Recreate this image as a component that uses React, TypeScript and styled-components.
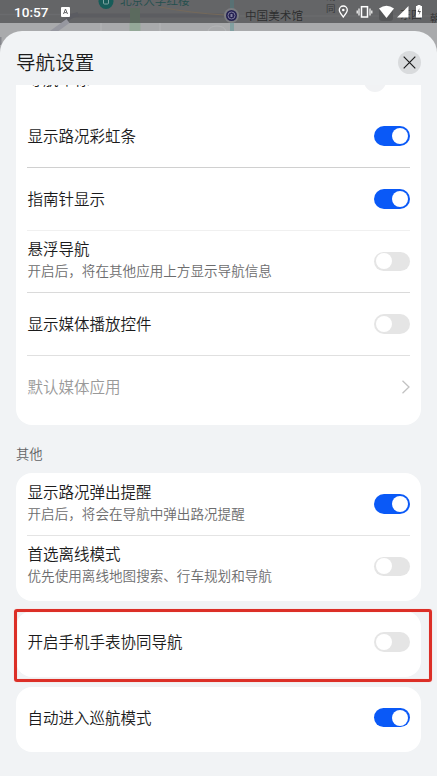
import React from "react";
import styled, { createGlobalStyle } from "styled-components";

const Global = createGlobalStyle`
  * { box-sizing: border-box; }
  body { margin: 0; overflow: hidden; font-family: Roboto, "Noto Sans CJK SC", sans-serif; }
`;

const Screen = styled.div`
  position: relative;
  width: 437px;
  height: 776px;
  overflow: hidden;
  background: #a9aaac;
  padding-top: 31px;
`;

const MapBackdrop = styled.svg`
  position: absolute;
  top: 0;
  left: 0;
`;

const MapLabel = styled.span<{ $x: number; $y: number; $size: number; $color: string }>`
  position: absolute;
  left: ${(p) => p.$x}px;
  top: ${(p) => p.$y}px;
  font: 350 ${(p) => p.$size}px/1 "Noto Sans CJK SC", sans-serif;
  color: ${(p) => p.$color};
  white-space: nowrap;
`;

const StatusBar = styled.header`
  position: absolute;
  top: 0;
  left: 0;
  width: 100%;
  height: 23px;
  overflow: hidden;
`;

const Clock = styled.time`
  position: absolute;
  left: 14px;
  top: 4px;
  color: #fff;
  font: 500 13.6px/17px Roboto, sans-serif;
`;

const StatusIcons = styled.svg`
  position: absolute;
  top: 0;
  left: 0;
`;

const Sheet = styled.main`
  position: relative;
  height: 745px;
  background: #f1f3f5;
  border-radius: 22px 22px 0 0;
  overflow: hidden;
`;

const SheetHeader = styled.div`
  height: 54px;
  padding: 8px 16px 0;
  display: flex;
  align-items: center;
  justify-content: space-between;
`;

const Title = styled.h1`
  margin: 0;
  font: 350 19.6px/28px "Noto Sans CJK SC", sans-serif;
  color: #1b1b1c;
`;

const CloseButton = styled.button`
  width: 23px;
  height: 23px;
  padding: 0;
  border: 0;
  border-radius: 50%;
  background: #d9dbdd;
  display: grid;
  place-items: center;
`;

const ScrollArea = styled.div`
  height: 691px;
  padding: 0 16px;
  overflow: hidden;
`;

const Card = styled.section<{ $bottom?: number; $gap?: number; $open?: boolean }>`
  background: #fff;
  border-radius: ${(p) => (p.$open ? "0 0 16px 16px" : "16px")};
  padding: 0 11px ${(p) => p.$bottom ?? 3}px;
  margin-bottom: ${(p) => p.$gap ?? 0}px;
  width: 405px;
`;

const ClippedRow = styled.div`
  height: 20.2px;
  overflow: hidden;
  display: flex;
  justify-content: space-between;
  align-items: flex-start;
`;

const ClippedLabel = styled.span`
  font: 350 15.5px/20px "Noto Sans CJK SC", sans-serif;
  color: #1f1f20;
  margin: -17px 0 0 0.5px;
`;

const ClippedKnob = styled.i`
  width: 22px;
  height: 22px;
  border-radius: 50%;
  background: #f1f2f4;
  margin: -15px 24px 0 0;
`;

const Row = styled.div<{ $line?: string }>`
  height: 62.7px;
  display: flex;
  align-items: center;
  justify-content: space-between;
  border-bottom: 1px solid ${(p) => p.$line ?? "transparent"};
`;

const Copy = styled.div<{ $lift?: number }>`
  padding: 0 0 ${(p) => p.$lift ?? 1.5}px 0.5px;
`;

const Label = styled.div<{ $muted?: boolean }>`
  font: 350 15.5px/22px "Noto Sans CJK SC", sans-serif;
  color: ${(p) => (p.$muted ? "#999" : "#1b1b1c")};
  white-space: nowrap;
`;

const Hint = styled.div`
  font: 350 13.58px/22px "Noto Sans CJK SC", sans-serif;
  color: #6c6c6d;
  white-space: nowrap;
`;

const Toggle = styled.span<{ $on?: boolean }>`
  width: 35.6px;
  height: 19.6px;
  padding: 1.8px;
  border-radius: 10px;
  background: ${(p) => (p.$on ? "#0a59f7" : "#e5e5e5")};
  display: flex;
  justify-content: ${(p) => (p.$on ? "flex-end" : "flex-start")};
  &::after {
    content: "";
    width: 16px;
    height: 16px;
    border-radius: 50%;
    background: #fff;
  }
`;

const SectionTitle = styled.h2`
  margin: 0;
  height: 48px;
  padding-top: 18px;
  font: 350 13.3px/22px "Noto Sans CJK SC", sans-serif;
  color: #626365;
`;

const Highlight = styled.div`
  position: absolute;
  left: 13.5px;
  top: 577.5px;
  width: 418px;
  height: 73px;
  border: 3px solid #dc2f27;
  border-radius: 3px;
  box-shadow: 0 0 1px #f8a09a, inset 0 0 1px #f8a09a;
`;

type SettingProps = { label: string; hint?: string; on?: boolean; line?: string };

function Setting({ label, hint, on, line }: SettingProps) {
  return (
    <Row $line={line}>
      <Copy $lift={hint ? 4 : 1.5}>
        <Label>{label}</Label>
        {hint && <Hint>{hint}</Hint>}
      </Copy>
      <Toggle $on={on} role="switch" aria-checked={!!on} />
    </Row>
  );
}

export default function App() {
  return (
    <>
      <Global />
      <Screen>
        <MapBackdrop width="437" height="60" viewBox="0 0 437 60">
          <rect width="437" height="60" fill="#a9aaac" />
          <rect width="437" height="23" fill="#646567" />
          <path d="M70 15.500H225" stroke="#5c5d61" strokeWidth="4" />
          <path d="M0 14.500H60M240 16H437" stroke="#6a6b6e" strokeWidth="1.500" />
          <path d="M78 14Q69 16 64 23" stroke="#5b5c62" strokeWidth="4" fill="none" />
          <path d="M68 21L50 34" stroke="#96979f" strokeWidth="5" />
          <path d="M0 37V45" stroke="#85868c" strokeWidth="3" />
          <path d="M135 8V23" stroke="#5b6a5e" strokeWidth="10" />
          <path d="M135 23V31" stroke="#94a898" strokeWidth="11" />
          <path d="M232 0V23" stroke="#587174" strokeWidth="4" />
          <path d="M232 23V31" stroke="#82a0a1" strokeWidth="4" />
          <path d="M101 23V31M160 23V31M208 31q2-5 9-5t9 5" stroke="#b5b6b8" fill="none" />
          <path d="M160 7Q190 13 225 15" stroke="#75695a" fill="none" />
          <circle cx="106" cy="1.500" r="7.500" fill="#175c59" />
          <rect x="103.500" y="-2" width="5" height="6" rx="1" stroke="#7fa5a3" fill="none" />
          <circle cx="231.500" cy="15.500" r="7.500" fill="#7b7c80" />
          <circle cx="231.500" cy="15.500" r="5.500" fill="#242052" />
          <circle cx="231.500" cy="15.500" r="3.500" stroke="#8583a0" strokeWidth=".9" fill="none" />
          <path d="M230.500 14h2v3h-2z" fill="#8583a0" />
          <rect x="379" y="8" width="14" height="13" rx="3" fill="#555658" />
        </MapBackdrop>
        <StatusBar>
          <MapLabel $x={120} $y={-5.5} $size={11.6} $color="#234f4e">北京大学红楼</MapLabel>
          <MapLabel $x={245} $y={10} $size={11.6} $color="#2c2d2e">中国美术馆</MapLabel>
          <MapLabel $x={326} $y={-8} $size={9.5} $color="#343536">胡</MapLabel>
          <MapLabel $x={326} $y={4} $size={9.5} $color="#343536">同</MapLabel>
          <MapLabel $x={400} $y={9} $size={11} $color="#303132">东四</MapLabel>
          <MapLabel $x={430} $y={13} $size={10} $color="#303132">朝</MapLabel>
          <Clock>10:57</Clock>
          <StatusIcons width="437" height="23" viewBox="0 0 437 23">
            <rect x="61" y="7" width="9" height="10" rx="1" fill="#fff" />
            <path d="M63.500 14L65.500 9L67.500 14M64.200 12.600H66.800" stroke="#646567" fill="none" />
            <path d="M343.300 17C341 14 339.300 12 339.300 10a4 4 0 0 1 8 0C347.300 12 345.600 14 343.300 17Z" stroke="#fff" strokeWidth="1.300" fill="none" />
            <circle cx="343.300" cy="10" r="1.300" fill="#fff" />
            <rect x="361.500" y="6.700" width="6" height="10.300" stroke="#fff" strokeWidth="1.500" fill="none" />
            <path d="M359 8.500V15.500M357.200 10.500V13.500M370 8.500V15.500M371.800 10.500V13.500" stroke="#fff" strokeWidth="1.200" />
            <path d="M379 8.500Q386.500 3 394 8.500L386.500 18Z" fill="#fff" />
            <path d="M408.500 6V17.500H397Z" fill="#fff" />
            <path d="M416 6h1.500V5h3v1H422V17.500H416Z" fill="#fff" />
            <path d="M419.500 8L417.500 12H419.500L418.500 15.500L421 11H419Z" fill="#555" />
          </StatusIcons>
        </StatusBar>
        <Sheet>
          <SheetHeader>
            <Title>导航设置</Title>
            <CloseButton aria-label="关闭">
              <svg width="13" height="13" viewBox="0 0 13 13">
                <path d="M.7.7L12.300 12.300M12.300.7L.7 12.300" stroke="#1c1c1d" strokeWidth="1.200" />
              </svg>
            </CloseButton>
          </SheetHeader>
          <ScrollArea>
            <Card $open $bottom={6.3}>
              <ClippedRow>
                <ClippedLabel>导航车标</ClippedLabel>
                <ClippedKnob />
              </ClippedRow>
              <Setting label="显示路况彩虹条" on line="#d0d0d0" />
              <Setting label="指南针显示" on line="#f0f0f0" />
              <Setting label="悬浮导航" hint="开启后，将在其他应用上方显示导航信息" line="#dadada" />
              <Setting label="显示媒体播放控件" line="#e0e0e0" />
              <Row>
                <Copy><Label $muted>默认媒体应用</Label></Copy>
                <svg width="9" height="14" viewBox="0 0 9 14">
                  <path d="M1.500.7L8 7L1.500 13.300" stroke="#c2c2c2" strokeWidth="1.300" fill="none" />
                </svg>
              </Row>
            </Card>
            <SectionTitle>其他</SectionTitle>
            <Card $bottom={2.6} $gap={10.4}>
              <Setting label="显示路况弹出提醒" hint="开启后，将会在导航中弹出路况提醒" on line="#e4e4e4" />
              <Setting label="首选离线模式" hint="优先使用离线地图搜索、行车规划和导航" />
            </Card>
            <Card $bottom={2.6} $gap={10.2}>
              <Setting label="开启手机手表协同导航" />
            </Card>
            <Card $bottom={2.6}>
              <Setting label="自动进入巡航模式" on />
            </Card>
          </ScrollArea>
          <Highlight />
        </Sheet>
      </Screen>
    </>
  );
}
